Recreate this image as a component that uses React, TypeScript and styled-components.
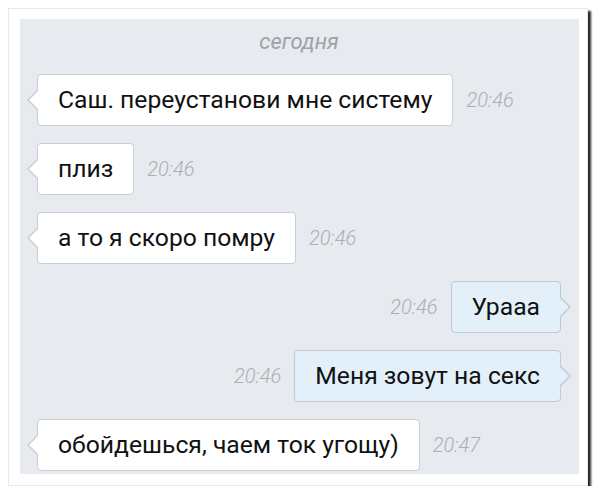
import React from "react";
import styled, { createGlobalStyle, css } from "styled-components";

const Global = createGlobalStyle`
  html, body { margin: 0; padding: 0; background: #ffffff; }
  body { font-family: Roboto, "Noto Sans", sans-serif; }
`;

const Frame = styled.div`
  margin: 8px 0 0 8px;
  width: 580px;
  height: 478px;
  box-sizing: border-box;
  padding: 10px 8px 11px 11px;
  background: #ffffff;
  border: 1px solid #e6e9ec;
  box-shadow: 3px 3px 2px #2a2a2a;
`;

const Chat = styled.div`
  height: 100%;
  background: #e7eaee;
  display: flex;
  flex-direction: column;
  gap: 17px;
  padding: 10px 18px 0 17px;
  box-sizing: border-box;
`;

const DateLabel = styled.div`
  text-align: center;
  font-style: italic;
  font-size: 22px;
  line-height: 26px;
  color: #9ca2a9;
  margin-bottom: 2px;
`;

const Row = styled.div<{ $out?: boolean }>`
  display: flex;
  align-items: center;
  justify-content: ${(p) => (p.$out ? "flex-end" : "flex-start")};
  gap: 13px;
`;

const Bubble = styled.div<{ $out?: boolean }>`
  position: relative;
  height: 52px;
  box-sizing: border-box;
  display: flex;
  align-items: center;
  padding: 0 20px 2px;
  font-size: 24.7px;
  color: #111111;
  border-radius: 4px;
  border: 1px solid;
  ${(p) =>
    p.$out
      ? css`
          background: #e3f0fa;
          border-color: #bccbd9;
        `
      : css`
          background: #ffffff;
          border-color: #c9ced4;
        `}

  &::before,
  &::after {
    content: "";
    position: absolute;
    top: 50%;
    width: 0;
    height: 0;
    border-top: 10px solid transparent;
    border-bottom: 10px solid transparent;
  }
  ${(p) =>
    p.$out
      ? css`
          &::before {
            right: -11px;
            margin-top: -10px;
            border-left: 10px solid #bccbd9;
          }
          &::after {
            right: -9px;
            margin-top: -9px;
            border-top-width: 9px;
            border-bottom-width: 9px;
            border-left: 9px solid #e3f0fa;
          }
        `
      : css`
          &::before {
            left: -11px;
            margin-top: -10px;
            border-right: 10px solid #c9ced4;
          }
          &::after {
            left: -9px;
            margin-top: -9px;
            border-top-width: 9px;
            border-bottom-width: 9px;
            border-right: 9px solid #ffffff;
          }
        `}
`;

const Time = styled.span`
  font-style: italic;
  font-weight: 300;
  font-size: 20px;
  color: #a9afb6;
`;

type Msg = { text: string; time: string; out?: boolean };

const messages: Msg[] = [
  { text: "Саш. переустанови мне систему", time: "20:46" },
  { text: "плиз", time: "20:46" },
  { text: "а то я скоро помру", time: "20:46" },
  { text: "Урааа", time: "20:46", out: true },
  { text: "Меня зовут на секс", time: "20:46", out: true },
  { text: "обойдешься, чаем ток угощу)", time: "20:47" },
];

export default function App() {
  return (
    <>
      <Global />
      <Frame>
        <Chat>
          <DateLabel>сегодня</DateLabel>
          {messages.map((m, i) => (
            <Row key={i} $out={m.out}>
              {m.out && <Time>{m.time}</Time>}
              <Bubble $out={m.out}>{m.text}</Bubble>
              {!m.out && <Time>{m.time}</Time>}
            </Row>
          ))}
        </Chat>
      </Frame>
    </>
  );
}
